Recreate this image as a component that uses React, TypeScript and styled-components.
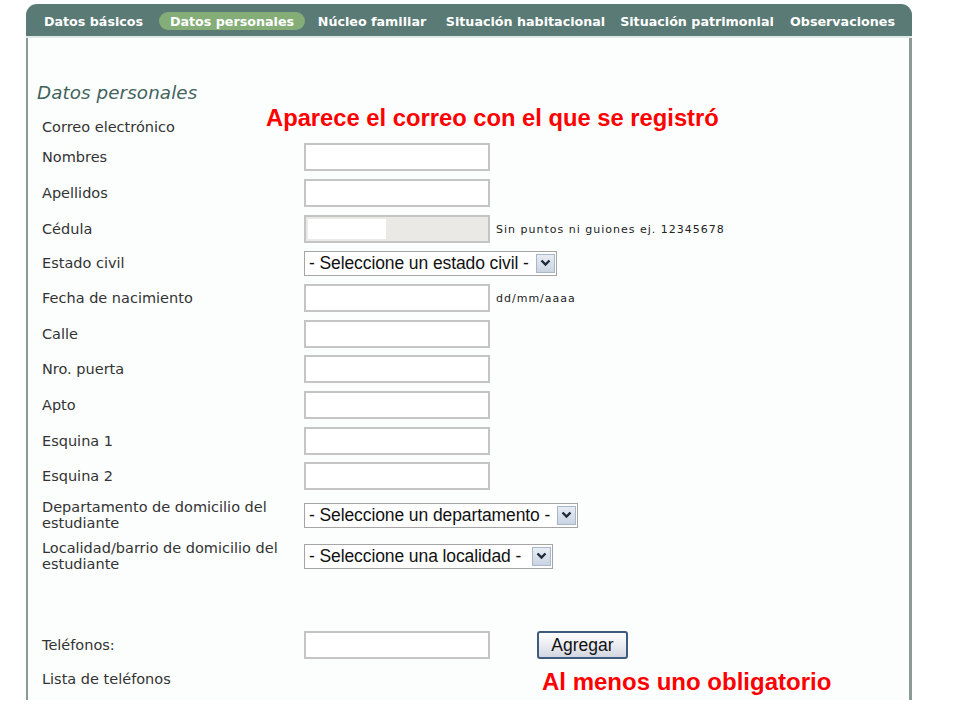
import React from "react";
import styled, { createGlobalStyle } from "styled-components";

const Global = createGlobalStyle`
  html, body { margin: 0; padding: 0; background: #ffffff; }
  body { font-family: "DejaVu Sans", Verdana, sans-serif; }
`;

const Page = styled.div`
  width: 960px;
  height: 720px;
  position: relative;
  overflow: hidden;
  padding-top: 4px;
  box-sizing: border-box;
`;

const Panel = styled.div`
  margin-left: 26px;
  width: 886px;
  display: flex;
  flex-direction: column;
`;

const TabBar = styled.div`
  height: 32px;
  background: #5a7a75;
  border-radius: 11px 11px 0 0;
  display: flex;
  align-items: center;
  padding-left: 7px;
  border-bottom: 2px solid #dfeae8;
`;

const Tab = styled.div<{ $active?: boolean; $w: number; $ml: number }>`
  width: ${(p) => p.$w}px;
  margin-left: ${(p) => p.$ml}px;
  height: 18px;
  margin-top: 2px;
  border-radius: 9px;
  display: flex;
  align-items: center;
  justify-content: center;
  font-family: "DejaVu Sans", Verdana, sans-serif;
  font-weight: bold;
  font-size: 12.7px;
  color: #ffffff;
  background: ${(p) => (p.$active ? "#84ad78" : "transparent")};
  white-space: nowrap;
  flex: none;
`;

const Body = styled.div`
  height: 662px;
  border-left: 2px solid #8b9997;
  border-right: 3px solid #8b9997;
  background: #fcfefe;
  position: relative;
  padding: 44px 0 0 9px;
  box-sizing: border-box;
`;

const Heading = styled.h2`
  margin: 0;
  font-family: "DejaVu Sans", Verdana, sans-serif;
  font-style: italic;
  font-weight: normal;
  font-size: 18.3px;
  color: #42625c;
  letter-spacing: 0.1px;
  height: 22px;
  line-height: 22px;
`;

const Form = styled.div`
  display: flex;
  flex-direction: column;
  padding-left: 5px;
`;

const Row = styled.div<{ $space: number; $h?: number }>`
  display: grid;
  grid-template-columns: 262px auto;
  align-items: center;
  height: ${(p) => p.$h ?? 28}px;
  margin-top: ${(p) => p.$space}px;
`;

const Label = styled.div`
  font-family: "DejaVu Sans", Verdana, sans-serif;
  font-size: 14.5px;
  color: #333333;
  line-height: 16px;
  white-space: nowrap;
`;

const Field = styled.div`
  display: flex;
  align-items: center;
  gap: 6px;
`;

const Input = styled.div<{ $disabled?: boolean }>`
  width: 180px;
  height: 24px;
  border: 2px solid #c4c4c4;
  background: ${(p) => (p.$disabled ? "#ebe9e5" : "#ffffff")};
  display: flex;
  align-items: center;
  padding-left: 2px;
  flex: none;
`;

const Filled = styled.div`
  width: 78px;
  height: 20px;
  background: #ffffff;
`;

const Hint = styled.span`
  font-family: "DejaVu Sans", Verdana, sans-serif;
  font-size: 11px;
  letter-spacing: 1px;
  color: #222222;
  white-space: nowrap;
`;

const Select = styled.div<{ $w: number }>`
  width: ${(p) => p.$w}px;
  height: 23px;
  border: 1px solid #a5a5a5;
  background: #ffffff;
  display: flex;
  align-items: center;
  justify-content: space-between;
  box-sizing: content-box;
  padding-left: 4px;
  padding-right: 1px;
`;

const SelectText = styled.span`
  font-family: "Liberation Sans", Arial, sans-serif;
  font-size: 17.5px;
  letter-spacing: -0.1px;
  color: #111111;
  white-space: nowrap;
`;

const Arrow = styled.div`
  width: 19px;
  height: 19px;
  border: 1px solid #a9b6c9;
  background: linear-gradient(#e8edf4, #c9d3e2);
  display: flex;
  align-items: center;
  justify-content: center;
  box-sizing: border-box;
  flex: none;
`;

const Button = styled.div`
  margin-left: 41px;
  width: 87px;
  height: 24px;
  border: 2px solid #3e5a7e;
  border-radius: 3px;
  background: linear-gradient(#ffffff, #e6e8ef 60%, #d2d6e0);
  display: flex;
  align-items: center;
  justify-content: center;
  font-family: "Liberation Sans", Arial, sans-serif;
  font-size: 17.5px;
  color: #111111;
`;

const Note = styled.div<{ $x: number; $y: number; $size: number }>`
  position: absolute;
  left: ${(p) => p.$x}px;
  top: ${(p) => p.$y}px;
  font-family: "Liberation Sans", Arial, sans-serif;
  font-weight: bold;
  font-size: ${(p) => p.$size}px;
  color: #ff0000;
  white-space: nowrap;
`;

const Chevron = () => (
  <svg width="11" height="8" viewBox="0 0 11 8">
    <path d="M1.5 1.5 L5.5 5.5 L9.5 1.5" fill="none" stroke="#1e2a3a" strokeWidth="2.4" />
  </svg>
);

const FakeSelect = ({ w, text }: { w: number; text: string }) => (
  <Select $w={w}>
    <SelectText>{text}</SelectText>
    <Arrow>
      <Chevron />
    </Arrow>
  </Select>
);

const tabs = [
  { t: "Datos básicos", w: 121, ml: 0 },
  { t: "Datos personales", w: 146, ml: 5, active: true },
  { t: "Núcleo familiar", w: 128, ml: 3 },
  { t: "Situación habitacional", w: 177, ml: 1 },
  { t: "Situación patrimonial", w: 164, ml: 1 },
  { t: "Observaciones", w: 117, ml: 5 },
];

const textRows: { label: string; space: number }[] = [
  { label: "Nombres", space: 2 },
  { label: "Apellidos", space: 8 },
];

const plainRows: { label: string; space: number }[] = [
  { label: "Calle", space: 8 },
  { label: "Nro. puerta", space: 7 },
  { label: "Apto", space: 8 },
  { label: "Esquina 1", space: 8 },
  { label: "Esquina 2", space: 7 },
];

export default function App() {
  return (
    <Page>
      <Global />
      <Panel>
        <TabBar>
          {tabs.map((t) => (
            <Tab key={t.t} $active={t.active} $w={t.w} $ml={t.ml}>
              {t.t}
            </Tab>
          ))}
        </TabBar>
        <Body>
          <Heading>Datos personales</Heading>
          <Form>
            <Row $space={9}>
              <Label>Correo electrónico</Label>
              <div />
            </Row>
            {textRows.map((r) => (
              <Row key={r.label} $space={r.space}>
                <Label>{r.label}</Label>
                <Field>
                  <Input />
                </Field>
              </Row>
            ))}
            <Row $space={8}>
              <Label>Cédula</Label>
              <Field>
                <Input $disabled>
                  <Filled />
                </Input>
                <Hint>Sin puntos ni guiones ej. 12345678</Hint>
              </Field>
            </Row>
            <Row $space={6}>
              <Label>Estado civil</Label>
              <Field>
                <FakeSelect w={246} text="- Seleccione un estado civil -" />
              </Field>
            </Row>
            <Row $space={7}>
              <Label>Fecha de nacimiento</Label>
              <Field>
                <Input />
                <Hint>dd/mm/aaaa</Hint>
              </Field>
            </Row>
            {plainRows.map((r) => (
              <Row key={r.label} $space={r.space}>
                <Label>{r.label}</Label>
                <Field>
                  <Input />
                </Field>
              </Row>
            ))}
            <Row $space={9} $h={32}>
              <Label>
                Departamento de domicilio del
                <br />
                estudiante
              </Label>
              <Field>
                <FakeSelect w={267} text="- Seleccione un departamento -" />
              </Field>
            </Row>
            <Row $space={9} $h={32}>
              <Label>
                Localidad/barrio de domicilio del
                <br />
                estudiante
              </Label>
              <Field>
                <FakeSelect w={242} text="- Seleccione una localidad -" />
              </Field>
            </Row>
            <Row $space={59}>
              <Label>Teléfonos:</Label>
              <Field>
                <Input />
                <Button>Agregar</Button>
              </Field>
            </Row>
            <Row $space={6}>
              <Label>Lista de teléfonos</Label>
              <div />
            </Row>
          </Form>
          <Note $x={238} $y={66} $size={23.75}>
            Aparece el correo con el que se registró
          </Note>
          <Note $x={514} $y={630} $size={24}>
            Al menos uno obligatorio
          </Note>
        </Body>
      </Panel>
    </Page>
  );
}
